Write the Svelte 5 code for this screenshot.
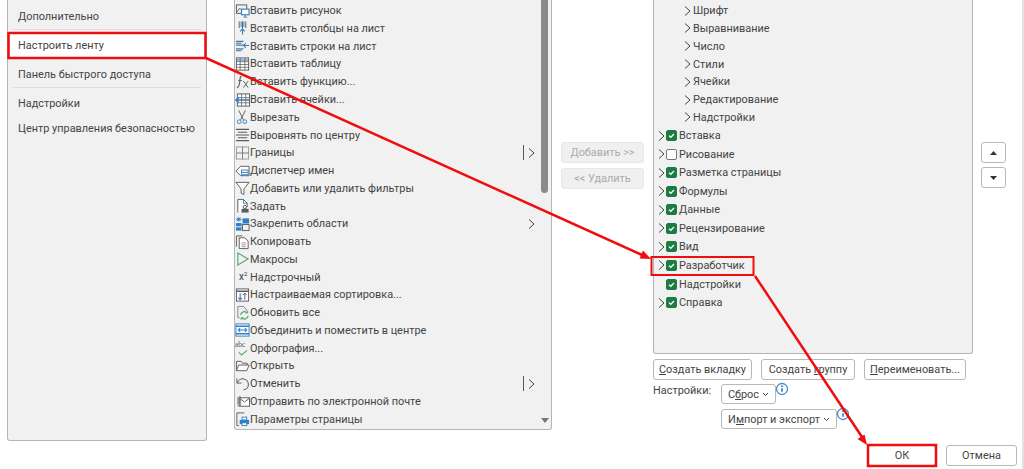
<script>
  // small 16x16 ribbon glyphs, one per command
  const B = '#2f7fc4', G = '#5b5b5b';
  const ICONS = {
    picture: `<rect x="1.5" y="1.5" width="11" height="9" fill="none" stroke="${G}"/><path d="M2 9l3-4 3 3" fill="none" stroke="${G}"/><rect x="7" y="6" width="8" height="6" fill="#fff" stroke="${B}" stroke-width="1.2"/><path d="M9 14.5h4M11 12v2" stroke="${B}"/>`,
    cols: `<path d="M4.5 1v7M8 1v10M11.500 1v7" stroke="${G}"/><path d="M6.500 1v6M9.500 1v6" stroke="${B}"/><path d="M8 15V9M5.500 11.500L8 9l2.500 2.500" fill="none" stroke="${B}" stroke-width="1.2"/>`,
    rows: `<path d="M1 3h8M1 7h8M1 11h8" stroke="${B}" stroke-width="1.4"/><path d="M1 5h6M1 13h6" stroke="${G}"/><path d="M15 7.500H9M11.500 5L9 7.500l2.500 2.500" fill="none" stroke="${B}" stroke-width="1.1"/>`,
    table: `<rect x="1.5" y="1.5" width="13" height="13" fill="#fff" stroke="${G}"/><rect x="2" y="2" width="12" height="3" fill="#8db7dc"/><path d="M1.5 5.500h13M1.500 8.500h13M1.500 11.500h13M5.500 1.500v13M10.500 1.500v13" stroke="${G}" stroke-width=".8"/>`,
    fx: `<path d="M7 2C5 2 5.500 4 5 8s-1 6-3 6" fill="none" stroke="${G}" stroke-width="1.2"/><path d="M3.500 6.500h4M9 7l5 7M14 7l-5 7" stroke="${G}"/>`,
    cells: `<rect x="2.5" y="1.5" width="13" height="13" fill="#fff" stroke="${G}"/><path d="M2.500 5.500h13M2.500 11h13M7 1.500v13M11.500 1.500v13" stroke="${G}" stroke-width=".8"/><path d="M15 8H1M4 5.500L1 8l3 2.500" fill="none" stroke="${B}" stroke-width="1.6"/>`,
    cut: `<path d="M4 1l5 10M11 1L6 11" stroke="${G}"/><circle cx="4.5" cy="13" r="2" fill="none" stroke="${B}"/><circle cx="10.5" cy="13" r="2" fill="none" stroke="${B}"/>`,
    center: `<path d="M1 2h14M3 5h10M1 8h14M3 11h10M1 14h14" stroke="${G}" stroke-width="1.1"/>`,
    borders: `<rect x="1.5" y="1.5" width="13" height="13" fill="none" stroke="#9a9a9a"/><path d="M8 1.500v13M1.500 8h13" stroke="#777"/>`,
    names: `<path d="M1 8l5-5h9v10H6z" fill="#fff" stroke="${G}"/><rect x="7" y="7" width="7" height="5" fill="#fff" stroke="${B}"/><path d="M7 9.500h7" stroke="${B}"/>`,
    filter: `<path d="M1 2h14L9.500 9v6l-3-1.500V9z" fill="#fff" stroke="${G}"/>`,
    ask: `<path d="M3 15V1h6l4 4v4" fill="#fff" stroke="${G}"/><path d="M9 1v4h4" fill="none" stroke="${B}"/><circle cx="10.5" cy="9" r="1.8" fill="none" stroke="${G}"/><rect x="7" y="11" width="7.5" height="4" fill="${G}"/>`,
    freeze: `<path d="M1 3h6M4 .5v5M2 1.200l4 3.600M6 1.200L2 4.800" stroke="${B}"/><rect x="1" y="7" width="6" height="8" fill="${B}"/><rect x="8" y="2" width="7" height="5.5" fill="${B}"/><rect x="8" y="8.5" width="7" height="6.5" fill="none" stroke="${G}"/><path d="M1 11h6" stroke="#fff"/>`,
    copy: `<path d="M1.500 13V1.500H8" fill="none" stroke="${G}"/><path d="M4.500 15V3.500h6l3.500 3.500v8z" fill="#fff" stroke="${G}"/><path d="M7 9h4.500M7 11h4.500M7 13h4.500" stroke="#999"/>`,
    play: `<path d="M3 1.500L14 8 3 14.500z" fill="none" stroke="#4fae6e" stroke-width="1.2"/>`,
    sortc: `<rect x="1.5" y="1.5" width="13" height="13" fill="#fff" stroke="${G}"/><path d="M1.500 4h13" stroke="${G}" stroke-width="1.6"/><path d="M5.500 6v7M3.500 11l2 2 2-2" fill="none" stroke="${B}" stroke-width="1.2"/><path d="M10.500 13V6M8.500 8l2-2 2 2" fill="none" stroke="${G}"/>`,
    refresh: `<path d="M3 13V1h6l3 3v2M3 13h2" fill="#eee" stroke="#888"/><path d="M6 10a4 4 0 0 1 7-2M14 11a4 4 0 0 1-7 2" fill="none" stroke="#4fae6e" stroke-width="1.3"/><path d="M13.500 5.500V8H11M6.500 15.500V13H9" fill="none" stroke="#4fae6e"/>`,
    merge: `<rect x="1" y="1.5" width="14" height="13" fill="#fff" stroke="${B}"/><path d="M1 4h14M1 12h14" stroke="${B}" stroke-width="1.4"/><path d="M3.500 8h9M5.500 6l-2 2 2 2M10.500 6l2 2-2 2" fill="none" stroke="${B}" stroke-width="1.1"/>`,
    check: `<path d="M4 12.500l3 3 6-5" fill="none" stroke="#4fae6e" stroke-width="1.2"/>`,
    folder: `<path d="M1.500 13V3h5l1.500 2h5v2" fill="none" stroke="${G}"/><path d="M1.500 13L4 7h11l-2.500 6z" fill="#fff" stroke="${G}"/>`,
    undo: `<path d="M2 2v5h5" fill="none" stroke="${G}"/><path d="M2.500 7A6 6 0 1 1 9 14.500" fill="none" stroke="${G}" stroke-width="1.1"/>`,
    mail: `<rect x="5" y="3.5" width="10.5" height="9" fill="#fff" stroke="${G}"/><path d="M5 4l5 4 5.500-4" fill="none" stroke="${G}"/><path d="M3 3v8a1.400 1.400 0 0 0 3 0V3a1 1 0 0 0-2 0v7" fill="none" stroke="#777" stroke-width=".9"/>`,
    page: `<path d="M2 15V1.500h8M2 15h2" fill="none" stroke="${G}"/><rect x="5" y="9" width="10" height="4.5" fill="${B}"/><rect x="7.5" y="6" width="5" height="3" fill="#fff" stroke="${B}"/><rect x="7.5" y="12" width="5" height="3" fill="#fff" stroke="${B}"/>`
  };

  const commands = [
    ['Вставить рисунок', 'picture'],
    ['Вставить столбцы на лист', 'cols'],
    ['Вставить строки на лист', 'rows'],
    ['Вставить таблицу', 'table'],
    ['Вставить функцию...', 'fx'],
    ['Вставить ячейки...', 'cells'],
    ['Вырезать', 'cut'],
    ['Выровнять по центру', 'center'],
    ['Границы', 'borders', 'split'],
    ['Диспетчер имен', 'names'],
    ['Добавить или удалить фильтры', 'filter'],
    ['Задать', 'ask'],
    ['Закрепить области', 'freeze', 'more'],
    ['Копировать', 'copy'],
    ['Макросы', 'play'],
    ['Надстрочный', 'sup'],
    ['Настраиваемая сортировка...', 'sortc'],
    ['Обновить все', 'refresh'],
    ['Объединить и поместить в центре', 'merge'],
    ['Орфография...', 'spell'],
    ['Открыть', 'folder'],
    ['Отменить', 'undo', 'split'],
    ['Отправить по электронной почте', 'mail'],
    ['Параметры страницы', 'page']
  ];

  const groups = ['Шрифт', 'Выравнивание', 'Число', 'Стили', 'Ячейки', 'Редактирование', 'Надстройки'];
  const tabs = [
    { name: 'Вставка', on: true, arrow: true },
    { name: 'Рисование', on: false, arrow: true },
    { name: 'Разметка страницы', on: true, arrow: true },
    { name: 'Формулы', on: true, arrow: true },
    { name: 'Данные', on: true, arrow: true },
    { name: 'Рецензирование', on: true, arrow: true },
    { name: 'Вид', on: true, arrow: true },
    { name: 'Разработчик', on: true, arrow: true },
    { name: 'Надстройки', on: true, arrow: false },
    { name: 'Справка', on: true, arrow: true }
  ];
</script>

{#snippet chevron()}
  <svg class="chev" width="9" height="12" viewBox="0 0 9 12"><path d="M2 1.500L7 6l-5 4.500" fill="none" stroke="#444" stroke-width="1"/></svg>
{/snippet}

{#snippet caret()}
  <svg width="7" height="5" viewBox="0 0 7 5"><path d="M1 1l2.500 2.500L6 1" fill="none" stroke="#444"/></svg>
{/snippet}

{#snippet info()}
  <svg class="info" width="14" height="14" viewBox="0 0 14 14"><circle cx="7" cy="7" r="5.500" fill="#fff" stroke="#3d8fd0" stroke-width="1.3"/><path d="M7 6.200v3.600" stroke="#2b6ea8" stroke-width="1.500"/><circle cx="7" cy="4.200" r=".9" fill="#2b6ea8"/></svg>
{/snippet}

<div class="dialog">
  <div class="main">
    <nav class="nav">
      <div class="nav-item first">Дополнительно</div>
      <hr />
      <div class="nav-item active">Настроить ленту</div>
      <div class="nav-item after-active">Панель быстрого доступа</div>
      <hr />
      <div class="nav-item after-sep">Надстройки</div>
      <div class="nav-item">Центр управления безопасностью</div>
    </nav>

    <div class="list">
      {#each commands as [label, icon, extra]}
        <div class="cmd">
          {#if icon === 'sup'}
            <span class="ico sup">x<sup>2</sup></span>
          {:else if icon === 'spell'}
            <svg class="ico" width="16" height="16" viewBox="0 0 16 16">
              <text x="0" y="7" font-size="8" font-family="Liberation Serif, serif" fill="#555">abc</text>
              {@html ICONS.check}
            </svg>
          {:else}
            <svg class="ico" width="16" height="16" viewBox="0 0 16 16">{@html ICONS[icon]}</svg>
          {/if}
          <span class="cmd-label">{label}</span>
          {#if extra === 'split'}<span class="split"></span>{/if}
          {#if extra}<span class="more">{@render chevron()}</span>{/if}
        </div>
      {/each}
      <div class="scroll-thumb"></div>
      <div class="scroll-down"></div>
    </div>

    <div class="mid">
      <button class="btn" disabled>Добавить &gt;&gt;</button>
      <button class="btn" disabled>&lt;&lt; Удалить</button>
    </div>

    <div class="customize">
      <div class="tree">
        {#each groups as g}
          <div class="group">{@render chevron()}<span>{g}</span></div>
        {/each}
        {#each tabs as t}
          <div class="tab">
            <span class="arrow">{#if t.arrow}{@render chevron()}{/if}</span>
            <span class="box" class:on={t.on}>
              {#if t.on}<svg width="11" height="11" viewBox="0 0 11 11"><path d="M3 5.600l1.800 1.700L8 4" fill="none" stroke="#fff" stroke-width="1.3"/></svg>{/if}
            </span>
            <span>{t.name}</span>
          </div>
        {/each}
      </div>
      <div class="tree-actions">
        <button class="btn w99"><span><u>С</u>оздать вкладку</span></button>
        <button class="btn w94"><span>Создать <u>г</u>руппу</span></button>
        <button class="btn w102"><span><u>П</u>ереименовать...</span></button>
      </div>
      <div class="settings">
        <span class="settings-label">Настройки:</span>
        <div class="settings-btns">
          <div class="drop-row">
            <button class="btn drop w55"><span>С<u>б</u>рос</span>{@render caret()}</button>
            {@render info()}
          </div>
          <div class="drop-row">
            <button class="btn drop w116"><span>И<u>м</u>порт и экспорт</span>{@render caret()}</button>
            {@render info()}
          </div>
        </div>
      </div>
    </div>

    <div class="order">
      <button class="btn order-btn"><svg width="7" height="4" viewBox="0 0 7 4"><path d="M3.500 0L7 4H0z" fill="#333"/></svg></button>
      <button class="btn order-btn"><svg width="7" height="4" viewBox="0 0 7 4"><path d="M3.500 4L7 0H0z" fill="#333"/></svg></button>
    </div>
  </div>

  <div class="footer">
    <button class="btn ok">ОК</button>
    <button class="btn cancel">Отмена</button>
  </div>

  <!-- red annotations drawn on top of the screenshot -->
  <svg class="marks" width="1024" height="469" viewBox="0 0 1024 469">
    <g fill="none" stroke="#f00d0d">
      <rect x="8.500" y="33" width="197" height="25" stroke-width="2.500"/>
      <rect x="651.500" y="257" width="102" height="18" stroke-width="2"/>
      <rect x="868" y="445" width="68" height="21" stroke-width="2.500"/>
      <path d="M206 58L642 255" stroke-width="2.500"/>
      <path d="M755 276L862 437" stroke-width="2.500"/>
    </g>
    <path d="M651 259l-11.500-.5 3.500-8z" fill="#f00d0d"/>
    <path d="M867 445l-9.500-6 7-4.500z" fill="#f00d0d"/>
  </svg>
</div>

<style>
  :global(*, *::before, *::after) { box-sizing: border-box; }

  :global(body) {
    margin: 0;
    background: #fff;
  }

  .dialog {
    position: relative;
    width: 1024px;
    height: 469px;
    overflow: hidden;
    background: #fff;
    color: #444;
    font-family: Roboto, 'Noto Sans', sans-serif;
    font-size: 10.9px;
    border-right: 2px solid #e2e2e2;
  }

  .main {
    display: flex;
    align-items: flex-start;
    height: 441px;
    padding-left: 7px;
  }

  .nav {
    width: 200px;
    height: 441px;
    margin-right: 27px;
    padding: 0 2px;
    background: #f1f1f1;
    border: 1px solid #b5b5b5;
    border-top: none;
    border-radius: 0 0 3px 3px;
  }

  .nav-item {
    display: flex;
    align-items: center;
    height: 25px;
    padding-left: 8px;
    white-space: nowrap;
  }

  .first { height: 29px; padding-top: 4px; }
  .active { background: #fff; }
  .after-active { margin-top: 4px; }
  .after-sep { margin-top: 2px; }

  .nav hr {
    height: 1px;
    margin: 0 3px 3px;
    border: none;
    background: #dcdcdc;
  }

  .list {
    position: relative;
    width: 318px;
    height: 430px;
    margin-right: 9px;
    padding-top: 1.8px;
    background: #f1f1f1;
    border: 1px solid #b5b5b5;
    border-top: none;
    border-radius: 0 0 3px 3px;
  }

  .cmd {
    display: flex;
    align-items: center;
    height: 17.78px;
    white-space: nowrap;
  }

  .ico {
    flex: none;
    width: 15px;
    height: 16px;
  }

  .sup {
    padding-left: 4px;
    font-size: 10px;
    line-height: 16px;
    color: #333;
  }

  .sup sup { font-size: 6px; line-height: 0; }

  .cmd-label { flex: 1; }

  .split {
    width: 1px;
    height: 15px;
    margin-right: 3px;
    background: #555;
  }

  .more {
    display: flex;
    margin-right: 15px;
  }

  .chev { display: block; flex: none; }

  .scroll-thumb {
    position: absolute;
    top: 0;
    left: 306px;
    width: 7px;
    height: 193px;
    background: #8a8a8a;
    border-radius: 0 0 4px 4px;
  }

  .scroll-down {
    position: absolute;
    top: 418px;
    left: 306px;
    border: 4px solid transparent;
    border-top: 5px solid #777;
  }

  .mid {
    display: flex;
    flex-direction: column;
    gap: 5px;
    width: 83px;
    margin-right: 9px;
    padding-top: 142px;
  }

  .btn {
    display: flex;
    align-items: center;
    justify-content: center;
    height: 21px;
    padding: 0;
    font: inherit;
    color: inherit;
    background: #fff;
    border: 1px solid #b8b8b8;
    border-radius: 3px;
    white-space: nowrap;
  }

  .btn:disabled {
    color: #ababab;
    background: #f0f0f0;
    border-color: #e8e8e8;
  }

  .customize { width: 320px; margin-right: 8px; }

  .tree {
    height: 354px;
    padding-top: 1.8px;
    background: #f1f1f1;
    border: 1px solid #b5b5b5;
    border-top: none;
    border-radius: 0 0 3px 3px;
  }

  .group {
    display: flex;
    align-items: center;
    gap: 1px;
    height: 17.8px;
    padding-left: 29px;
  }

  .tab {
    display: flex;
    align-items: center;
    height: 18.55px;
    padding-left: 3px;
  }

  .arrow { width: 9px; }

  .box {
    display: flex;
    flex: none;
    width: 11px;
    height: 11px;
    margin-right: 2px;
    background: #fff;
    border: 1px solid #777;
    border-radius: 2px;
  }

  .box svg { margin: -1px; flex: none; }
  .box.on { background: #1c7c44; border-color: #1c7c44; }

  .tree-actions {
    display: flex;
    gap: 9px;
    margin-top: 5px;
  }

  .w99 { width: 99px; }
  .w94 { width: 94px; }
  .w102 { width: 102px; }
  .w55 { width: 55px; height: 20px; }
  .w116 { width: 116px; height: 20px; }

  .settings {
    display: flex;
    margin-top: 4px;
  }

  .settings-label {
    width: 68px;
    line-height: 14px;
  }

  .settings-btns {
    display: flex;
    flex-direction: column;
    gap: 5px;
  }

  .drop-row {
    display: flex;
    align-items: flex-start;
  }

  .drop { gap: 3px; }
  .info { margin: -2px 0 0 -1px; }

  .order {
    display: flex;
    flex-direction: column;
    gap: 4px;
    padding-top: 142px;
  }

  .order-btn { width: 25px; }

  .footer {
    display: flex;
    justify-content: flex-end;
    gap: 10px;
    padding: 4px 5px 0 0;
  }

  .ok { width: 68px; }
  .cancel { width: 71px; }

  .marks {
    position: absolute;
    top: 0;
    left: 0;
    pointer-events: none;
  }
</style>
